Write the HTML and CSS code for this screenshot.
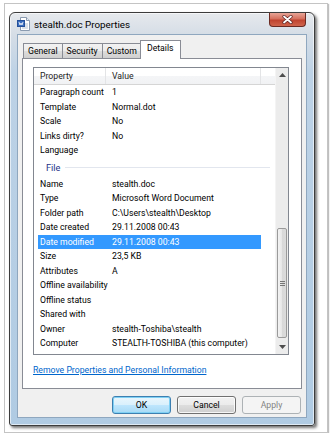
FILE: index.html
```html
<!DOCTYPE html>
<html>
<head>
<meta charset="utf-8">
<link rel="stylesheet" href="styles.css">
</head>
<body>
<div class="photo">
  <div class="window">
    <div class="titlebar">
      <svg class="ticon" width="13" height="14" viewBox="0 0 13 14">
        <path d="M3.5 0.5h6l3 3v10h-9z" fill="#fff" stroke="#8a9bb0"/>
        <path d="M9.5 0.5v3h3" fill="#e8eef5" stroke="#8a9bb0"/>
        <rect x="0.5" y="3.5" width="7" height="6" fill="#3b6fc0" stroke="#24509a"/>
        <path d="M2 5l1 3 1-2 1 2 1-3" fill="none" stroke="#fff" stroke-width="0.8"/>
        <path d="M8 7h3M8 9h3M5 11h6" stroke="#9fb2c8" stroke-width="0.8"/>
      </svg>
      <span class="ttext">stealth.doc Properties</span>
      <div class="close">
        <svg width="11" height="9" viewBox="0 0 11 9"><path d="M2 1.5l7 6M9 1.5l-7 6" stroke="#5a2020" stroke-width="3.2" stroke-linecap="round"/><path d="M2 1.5l7 6M9 1.5l-7 6" stroke="#fff" stroke-width="1.8" stroke-linecap="round"/></svg>
      </div>
    </div>
    <div class="client">
      <div class="tabs">
        <div class="tab">General</div>
        <div class="tab">Security</div>
        <div class="tab">Custom</div>
        <div class="tab sel">Details</div>
      </div>
      <div class="panel">
        <div class="lv">
          <div class="lv-body">
            <div class="hdr">
              <div class="hc c1">Property</div>
              <div class="hc c2">Value</div>
              <div class="hc c3"></div>
            </div>
            <div class="row"><span class="c1">Paragraph count</span><span class="c2">1</span></div>
            <div class="row"><span class="c1">Template</span><span class="c2">Normal.dot</span></div>
            <div class="row"><span class="c1">Scale</span><span class="c2">No</span></div>
            <div class="row"><span class="c1">Links dirty?</span><span class="c2">No</span></div>
            <div class="row"><span class="c1">Language</span><span class="c2"></span></div>
            <div class="group"><span class="gname">File</span><span class="gline"></span></div>
            <div class="row"><span class="c1">Name</span><span class="c2">stealth.doc</span></div>
            <div class="row"><span class="c1">Type</span><span class="c2">Microsoft Word Document</span></div>
            <div class="row"><span class="c1">Folder path</span><span class="c2">C:\Users\stealth\Desktop</span></div>
            <div class="row"><span class="c1">Date created</span><span class="c2">29.11.2008 00:43</span></div>
            <div class="row selrow"><span class="c1">Date modified</span><span class="c2">29.11.2008 00:43</span></div>
            <div class="row"><span class="c1">Size</span><span class="c2">23,5 KB</span></div>
            <div class="row"><span class="c1">Attributes</span><span class="c2">A</span></div>
            <div class="row"><span class="c1">Offline availability</span><span class="c2"></span></div>
            <div class="row"><span class="c1">Offline status</span><span class="c2"></span></div>
            <div class="row"><span class="c1">Shared with</span><span class="c2"></span></div>
            <div class="row"><span class="c1">Owner</span><span class="c2">stealth-Toshiba\stealth</span></div>
            <div class="row"><span class="c1">Computer</span><span class="c2">STEALTH-TOSHIBA (this computer)</span></div>
          </div>
          <div class="sb">
            <div class="sb-btn"><svg width="7" height="4" viewBox="0 0 7 4"><path d="M0 4L3.5 0 7 4z" fill="#4d4d4d"/></svg></div>
            <div class="sb-track">
              <div class="sb-gap"></div>
              <div class="thumb"><div class="grip"></div></div>
            </div>
            <div class="sb-btn"><svg width="7" height="4" viewBox="0 0 7 4"><path d="M0 0L3.5 4 7 0z" fill="#4d4d4d"/></svg></div>
          </div>
        </div>
        <a class="link" href="#">Remove Properties and Personal Information</a>
      </div>
      <div class="buttons">
        <div class="btn def">OK</div>
        <div class="btn">Cancel</div>
        <div class="btn dis">Apply</div>
      </div>
    </div>
  </div>
</div>
</body>
</html>
```

FILE: styles.css
```css
* { box-sizing: border-box; }
body {
  margin: 0;
  background: #fff;
  font-family: Roboto, "Liberation Sans", sans-serif;
  font-size: 8.7px;
  color: #000;
}
.photo {
  margin: 3px 0 0 4px;
  width: 324px;
  height: 430px;
  border: 1px solid #c4c4c4;
  box-shadow: 1px 1px 1px rgba(0,0,0,0.25);
  background: #fff;
  padding: 8px 0 0 4px;
}
.window {
  width: 306px;
  height: 414px;
  border: 1px solid #3c3c3c;
  border-radius: 6px 6px 3px 3px;
  background: linear-gradient(180deg, #e6e9ed 0, #d5dde6 22px, #bdd2e6 60px, #b0cbe3 100%);
  box-shadow: 2px 2px 3px rgba(0,0,0,0.55), inset 0 0 0 1px rgba(255,255,255,0.6);
  padding: 0 7px 7px 7px;
  display: flex;
  flex-direction: column;
}
.titlebar {
  height: 21px;
  display: flex;
  align-items: center;
  position: relative;
}
.ticon { margin: 1px 0 0 0; }
.ttext {
  margin-left: 4px;
  font-size: 9.8px;
  color: #000;
  margin-top: 1px;
}
.close {
  position: absolute;
  right: 1px;
  top: 0;
  width: 37px;
  height: 14px;
  border: 1px solid #6b2a22;
  border-top: none;
  border-radius: 0 0 4px 4px;
  background: linear-gradient(180deg, #e8a597 0, #d5705e 45%, #c04430 55%, #d0654d 100%);
  display: flex;
  align-items: center;
  justify-content: center;
}
.client {
  flex: 1;
  background: #f0f0f0;
  border: 1px solid #8fa7bf;
  padding: 5px 4px 0 4px;
  display: flex;
  flex-direction: column;
}
.tabs {
  display: flex;
  height: 18px;
  align-items: flex-end;
  padding-left: 1px;
  position: relative;
  z-index: 1;
}
.tab {
  height: 15px;
  border: 1px solid #898c95;
  border-bottom: none;
  background: linear-gradient(180deg, #f2f2f2 0, #ebebeb 50%, #dddddd 51%, #cfcfcf 100%);
  padding: 0 4px;
  line-height: 14px;
  margin-right: -1px;
  color: #000;
}
.tab.sel {
  background: #fff;
  margin-left: -1px;
  padding: 0 6px;
  line-height: 15px;
  margin-bottom: -1px;
  height: 19px;
}
.panel {
  height: 331px;
  background: #fff;
  border: 1px solid #898c95;
  padding: 8px 12px 0 10px;
}
.lv {
  display: flex;
  height: 288px;
  border: 1px solid #828790;
}
.lv-body {
  flex: 1;
  overflow: hidden;
}
.hdr {
  display: flex;
  height: 17px;
  background: linear-gradient(180deg, #ffffff 0, #ffffff 50%, #f4f5f7 51%, #f1f2f4 100%);
  border-bottom: 1px solid #d5d5d5;
}
.hc {
  line-height: 16px;
  padding-left: 6px;
  border-right: 1px solid #e3e4e6;
  color: #1e1e1e;
}
.c1 { width: 72px; flex: none; }
.c2 { width: 155px; flex: none; }
.hc.c3 { flex: 1; border-right: none; }
.row {
  display: flex;
  height: 14.5px;
  line-height: 14.5px;
  white-space: nowrap;
}
.row span { padding-left: 6px; }
.selrow {
  background: #3399ff;
  color: #fff;
  margin-left: 4px;
  width: 223px;
}
.selrow .c1 { width: 68px; padding-left: 2px; }
.group {
  height: 19px;
  display: flex;
  align-items: center;
  padding-left: 12px;
}
.gname { color: #1e3287; font-size: 9.2px; }
.gline {
  flex: none;
  width: 205px;
  margin-left: 5px;
  height: 1px;
  background: #e2e6ee;
  margin-top: 1px;
}
.sb {
  width: 13px;
  display: flex;
  flex-direction: column;
  background: #ececec;
  border-left: 1px solid #f4f4f4;
}
.sb-btn {
  height: 14px;
  display: flex;
  align-items: center;
  justify-content: center;
}
.sb-track { flex: 1; display: flex; flex-direction: column; }
.sb-gap { height: 146px; }
.thumb {
  height: 110px;
  margin: 0 1px;
  border: 1px solid #9a9a9a;
  border-radius: 2px;
  background: linear-gradient(90deg, #f3f3f3 0, #e6e6e6 50%, #d8d8d8 51%, #dcdcdc 100%);
  display: flex;
  align-items: center;
  justify-content: center;
}
.grip {
  width: 5px;
  height: 5px;
  border-top: 1px solid #777;
  border-bottom: 1px solid #777;
  position: relative;
}
.grip::after {
  content: "";
  display: block;
  height: 1px;
  margin-top: 1px;
  background: #777;
}
.link {
  display: block;
  margin-top: 9px;
  color: #0066cc;
  text-decoration: underline;
  line-height: 12px;
}
.buttons {
  display: flex;
  justify-content: flex-end;
  gap: 6px;
  padding: 7px 1px 0 0;
}
.btn {
  width: 59px;
  height: 18px;
  border: 1px solid #707070;
  border-radius: 3px;
  background: linear-gradient(180deg, #f2f2f2 0, #ebebeb 50%, #dddddd 51%, #cfcfcf 100%);
  text-align: center;
  line-height: 16px;
  box-shadow: inset 0 0 0 1px rgba(255,255,255,0.8);
}
.btn.def {
  border-color: #3c7fb1;
  background: linear-gradient(180deg, #eaf6fd 0, #d9f0fc 50%, #bee6fd 51%, #a7d9f5 100%);
  box-shadow: inset 0 0 0 1px #7fd0f4;
}
.btn.dis {
  border-color: #adb2b5;
  background: #f4f4f4;
  color: #838383;
  box-shadow: none;
}
```
